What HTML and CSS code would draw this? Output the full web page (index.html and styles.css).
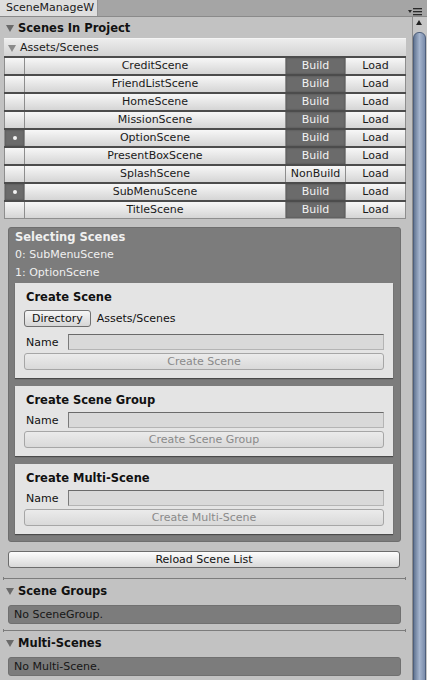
FILE: index.html
```html
<!DOCTYPE html>
<html lang="en">

<head>
    <meta charset="UTF-8">
    <meta name="viewport" content="width=device-width, initial-scale=1.0">
    <title>SceneManageWindow</title>
    <link rel="stylesheet" href="styles.css">
</head>

<body>
    <div class="window">
        <div class="tabbar">
            <div class="tab">SceneManageW</div>
            <div class="tab-menu">
                <svg width="16" height="10" viewBox="0 0 16 10">
                    <polygon points="0,3 4,3 2,6" fill="#2a2a2a" />
                    <rect x="5" y="1" width="9" height="1.3" fill="#2a2a2a" />
                    <rect x="5" y="4" width="9" height="1.3" fill="#2a2a2a" />
                    <rect x="5" y="7" width="9" height="1.3" fill="#2a2a2a" />
                </svg>
            </div>
        </div>

        <div class="main">
            <div class="content">
                <div class="section-head">
                    <span class="fold"></span>Scenes In Project
                </div>

                <div class="foldout">
                    <span class="fold light"></span>Assets/Scenes
                </div>

                <div class="scene-list">
                    <div class="scene-row">
                        <div class="cell check"></div>
                        <div class="cell name">CreditScene</div>
                        <div class="cell build on">Build</div>
                        <div class="cell load">Load</div>
                    </div>
                    <div class="scene-row">
                        <div class="cell check"></div>
                        <div class="cell name">FriendListScene</div>
                        <div class="cell build on">Build</div>
                        <div class="cell load">Load</div>
                    </div>
                    <div class="scene-row">
                        <div class="cell check"></div>
                        <div class="cell name">HomeScene</div>
                        <div class="cell build on">Build</div>
                        <div class="cell load">Load</div>
                    </div>
                    <div class="scene-row">
                        <div class="cell check"></div>
                        <div class="cell name">MissionScene</div>
                        <div class="cell build on">Build</div>
                        <div class="cell load">Load</div>
                    </div>
                    <div class="scene-row">
                        <div class="cell check on"><span class="dot"></span></div>
                        <div class="cell name">OptionScene</div>
                        <div class="cell build on">Build</div>
                        <div class="cell load">Load</div>
                    </div>
                    <div class="scene-row">
                        <div class="cell check"></div>
                        <div class="cell name">PresentBoxScene</div>
                        <div class="cell build on">Build</div>
                        <div class="cell load">Load</div>
                    </div>
                    <div class="scene-row">
                        <div class="cell check"></div>
                        <div class="cell name">SplashScene</div>
                        <div class="cell build">NonBuild</div>
                        <div class="cell load">Load</div>
                    </div>
                    <div class="scene-row">
                        <div class="cell check on"><span class="dot"></span></div>
                        <div class="cell name">SubMenuScene</div>
                        <div class="cell build on">Build</div>
                        <div class="cell load">Load</div>
                    </div>
                    <div class="scene-row">
                        <div class="cell check"></div>
                        <div class="cell name">TitleScene</div>
                        <div class="cell build on">Build</div>
                        <div class="cell load">Load</div>
                    </div>
                </div>

                <div class="panel">
                    <div class="panel-title">Selecting Scenes</div>
                    <div class="panel-line">0: SubMenuScene</div>
                    <div class="panel-line">1: OptionScene</div>

                    <div class="box">
                        <div class="box-title">Create Scene</div>
                        <div class="dir-row">
                            <button class="btn">Directory</button>
                            <span>Assets/Scenes</span>
                        </div>
                        <div class="field first">
                            <label>Name</label>
                            <div class="input"></div>
                        </div>
                        <button class="btn wide" disabled>Create Scene</button>
                    </div>

                    <div class="box">
                        <div class="box-title">Create Scene Group</div>
                        <div class="field">
                            <label>Name</label>
                            <div class="input"></div>
                        </div>
                        <button class="btn wide" disabled>Create Scene Group</button>
                    </div>

                    <div class="box">
                        <div class="box-title">Create Multi-Scene</div>
                        <div class="field">
                            <label>Name</label>
                            <div class="input"></div>
                        </div>
                        <button class="btn wide" disabled>Create Multi-Scene</button>
                    </div>
                </div>

                <button class="btn reload">Reload Scene List</button>

                <div class="divider"></div>
                <div class="section-head small">
                    <span class="fold"></span>Scene Groups
                </div>
                <div class="empty">No SceneGroup.</div>

                <div class="divider"></div>
                <div class="section-head small">
                    <span class="fold"></span>Multi-Scenes
                </div>
                <div class="empty">No Multi-Scene.</div>
            </div>

            <div class="scrollbar">
                <div class="arrow-up"></div>
                <div class="thumb"></div>
            </div>
        </div>
    </div>
</body>

</html>
```

FILE: styles.css
```css
* {
    box-sizing: border-box;
}

body {
    margin: 0;
    font-family: "DejaVu Sans", Verdana, sans-serif;
    font-size: 11px;
    color: #111;
    background: #c2c2c2;
}

.window {
    width: 427px;
    height: 680px;
    display: flex;
    flex-direction: column;
    overflow: hidden;
}

/* tab strip */
.tabbar {
    height: 17px;
    background: #a5a5a5;
    border-bottom: 1px solid #8a8a8a;
    display: flex;
    justify-content: space-between;
}

.tab {
    width: 98px;
    height: 16px;
    padding-left: 6px;
    line-height: 15px;
    background: #dedede;
    border-right: 1px solid #959595;
    white-space: nowrap;
    overflow: hidden;
    color: #1a1a1a;
}

.tab-menu {
    width: 19px;
    padding-top: 7px;
}

.tab-menu svg {
    display: block;
}

.main {
    flex: 1;
    display: flex;
    min-height: 0;
}

.content {
    width: 412px;
    padding: 2px 6px 0 4px;
}

/* foldout headers */
.section-head {
    height: 18px;
    display: flex;
    align-items: center;
    font-weight: bold;
    font-size: 11.5px;
    color: #111;
}

.fold {
    width: 0;
    height: 0;
    margin: 1px 4px 0 2px;
    border-left: 4px solid transparent;
    border-right: 4px solid transparent;
    border-top: 7px solid #6a6a6a;
}

.fold.light {
    margin-left: 4px;
    border-top-color: #8a8a8a;
}

.foldout {
    margin-top: 1px;
    width: 402px;
    height: 18px;
    display: flex;
    align-items: center;
    background: linear-gradient(#ededed, #d3d3d3);
    border-top: 1px solid #f4f4f4;
    color: #1a1a1a;
}

/* scene table */
.scene-list {
    width: 402px;
    border-bottom: 1px solid #8e8e8e;
}

.scene-row {
    display: grid;
    grid-template-columns: 20px 261px 60px 61px;
    height: 18px;
    border-top: 2px solid #4c4c4c;
}

.cell {
    height: 16px;
    line-height: 16px;
    text-align: center;
    border-left: 1px solid #8d8d8d;
    background: linear-gradient(#f7f7f7, #d5d5d5);
    color: #1a1a1a;
    white-space: nowrap;
}

.cell.load {
    border-right: 1px solid #8d8d8d;
}

.cell.on {
    background: #6b6b6b;
    box-shadow: inset 0 0 2px #4e4e4e;
    color: #f2f2f2;
}

.check {
    display: flex;
    align-items: center;
    justify-content: center;
}

.dot {
    width: 4px;
    height: 4px;
    border-radius: 50%;
    background: #f4f4f4;
}

/* selecting panel */
.panel {
    margin: 8px 0 0 4px;
    width: 393px;
    padding: 0 7px 7px 6px;
    background: #7c7c7c;
    border: 1px solid #6e6e6e;
    border-radius: 3px;
    color: #f0f0f0;
}

.panel-title {
    height: 18px;
    line-height: 18px;
    font-weight: bold;
    font-size: 11.5px;
}

.panel-line {
    height: 18px;
    line-height: 18px;
}

.box {
    margin-top: 8px;
    padding: 5px 9px 8px 9px;
    background: #e4e4e4;
    box-shadow: 0 1px 1px rgba(0, 0, 0, 0.4);
    color: #111;
}

.panel-line + .box {
    margin-top: 1px;
}

.box-title {
    height: 18px;
    line-height: 18px;
    padding-left: 2px;
    font-weight: bold;
    font-size: 11.5px;
}

.dir-row {
    margin-top: 4px;
    height: 17px;
    display: flex;
    align-items: center;
    gap: 6px;
}

.btn {
    height: 17px;
    padding: 0 7px;
    font-family: inherit;
    font-size: 11px;
    color: #111;
    background: linear-gradient(#f6f6f6, #d6d6d6);
    border: 1px solid #707070;
    border-radius: 3px;
}

.btn.wide {
    display: block;
    width: 100%;
    margin-top: 3px;
}

.btn:disabled {
    color: #8a8a8a;
    background: linear-gradient(#ebebeb, #d9d9d9);
    border-color: #a6a6a6;
}

.field {
    margin-top: 3px;
    height: 16px;
    display: flex;
    align-items: center;
}

.field.first {
    margin-top: 7px;
}

.field label {
    width: 44px;
    padding-left: 2px;
}

.input {
    flex: 1;
    height: 16px;
    background: #d9d9d9;
    border: 1px solid #b4b4b4;
    border-top-color: #6a6a6a;
    border-left-color: #7a7a7a;
}

.btn.reload {
    display: block;
    margin: 9px 0 0 4px;
    width: 392px;
    background: linear-gradient(#fdfdfd, #d8d8d8);
    border-color: #6c6c6c;
}

/* lower sections */
.divider {
    position: relative;
    margin: 10px 0 0 -1px;
    width: 403px;
    height: 1px;
    background: #7c7c7c;
}

.divider::before,
.divider::after {
    content: "";
    position: absolute;
    top: -1px;
    width: 1px;
    height: 3px;
    background: #7c7c7c;
}

.divider::before {
    left: 0;
}

.divider::after {
    right: 0;
}

.section-head.small {
    margin-top: 3px;
}

.empty {
    margin: 5px 0 0 4px;
    width: 393px;
    height: 19px;
    line-height: 17px;
    padding-left: 5px;
    background: #7c7c7c;
    border: 1px solid #707070;
    border-radius: 3px;
    color: #161616;
}

.empty + .divider {
    margin-top: 6px;
}

/* scrollbar */
.scrollbar {
    position: relative;
    width: 15px;
    background: #c6c6c6;
    border-left: 1px solid #8c8c8c;
}

.arrow-up {
    position: absolute;
    left: 3px;
    top: 3px;
    border-left: 3.5px solid transparent;
    border-right: 3.5px solid transparent;
    border-bottom: 5px solid #222;
}

.thumb {
    position: absolute;
    left: 0;
    top: 15px;
    width: 13px;
    bottom: -6px;
    border-radius: 6px;
    border: 1px solid #4e5f7c;
    background: linear-gradient(to right, #647794, #a4b4cd 50%, #7a8cab);
}
```
